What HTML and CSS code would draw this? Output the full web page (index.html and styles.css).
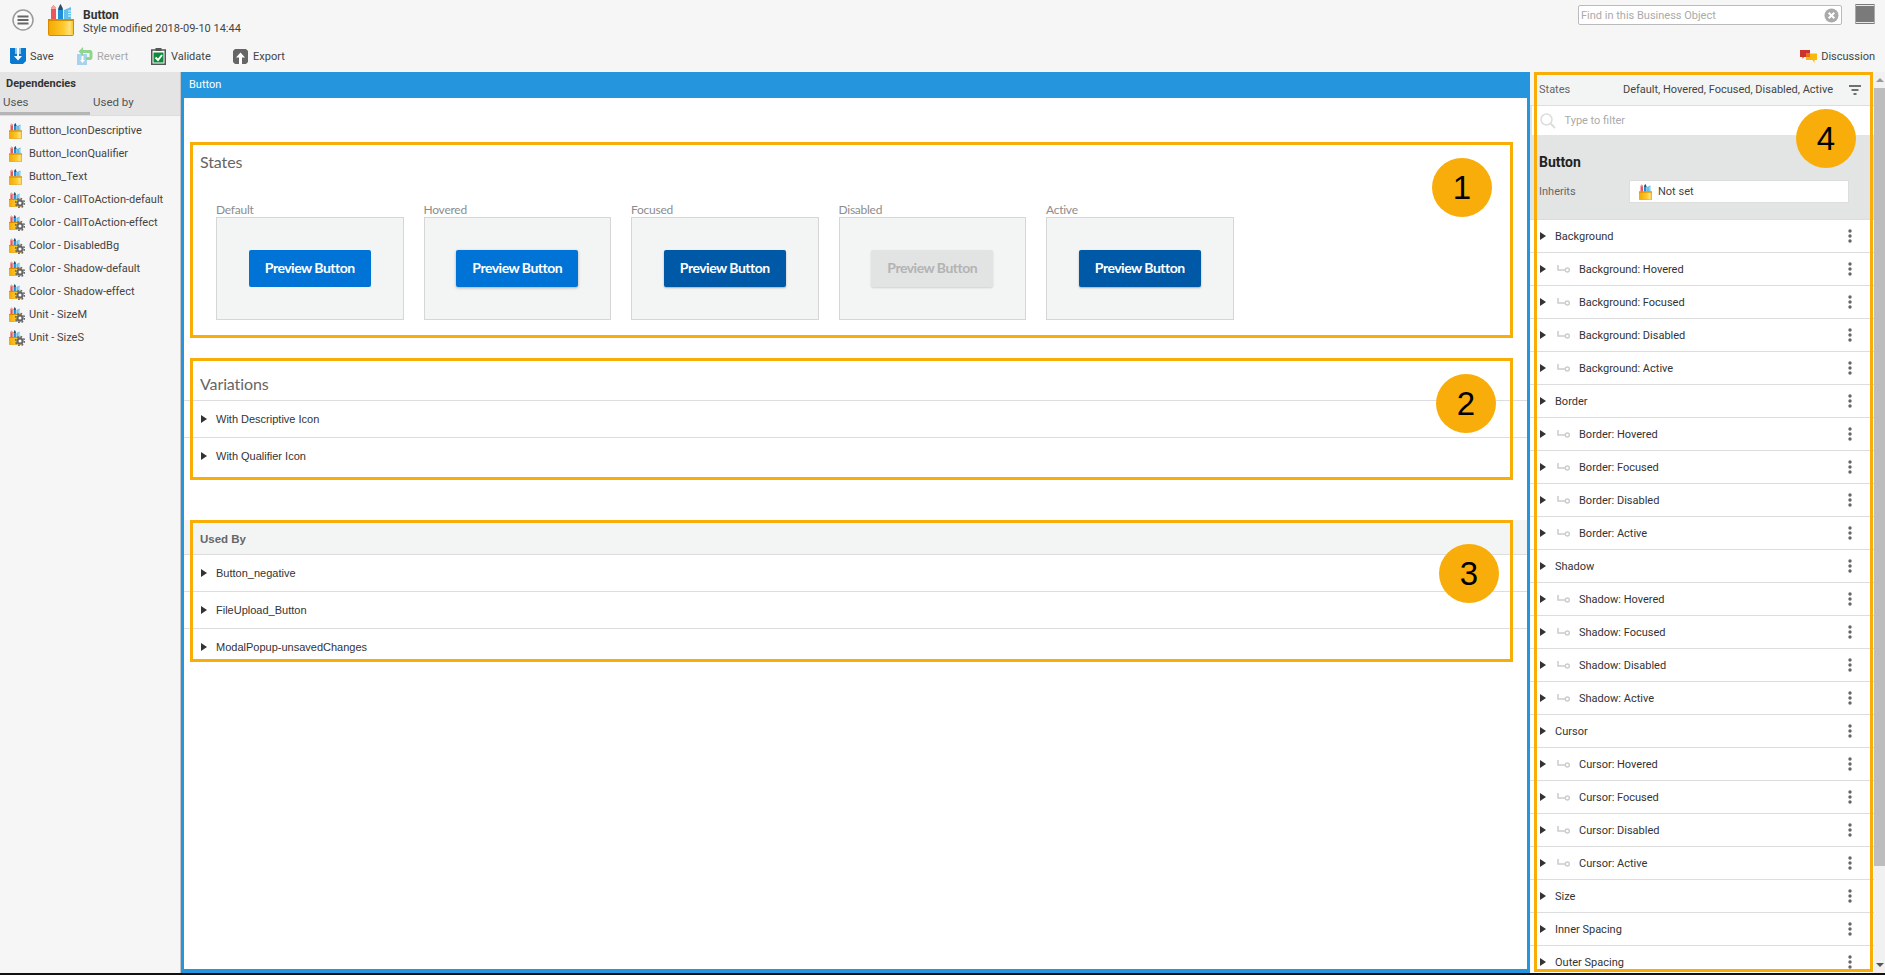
FILE: index.html
```html
<!DOCTYPE html>
<html lang="en">
<head>
<meta charset="utf-8">
<title>Button</title>
<link rel="stylesheet" href="styles.css">
</head>
<body>
<svg class="defs" aria-hidden="true">
  <defs>
    <linearGradient id="potfill" x1="0" x2="1" y1="0" y2="0">
      <stop offset="0" stop-color="#f5a800"/>
      <stop offset="0.6" stop-color="#fdc92e"/>
      <stop offset="0.85" stop-color="#ffe27e"/>
      <stop offset="1" stop-color="#f8c020"/>
    </linearGradient>
    <symbol id="pot" viewBox="0 0 26 32">
      <path d="M3 15V4L5.500 1L8 4V15Z" fill="#e8575c"/>
      <path d="M3 5H8V4L5.500 1L3 4Z" fill="#f2a6a0"/>
      <path d="M10 15V5L12.500 0L15 5V15Z" fill="#1f8fd8"/>
      <path d="M10.500 6V4L12.500 0L14.500 4V6Z" fill="#3b4a5a"/>
      <path d="M16 15V6L23 3V15Z" fill="#62c0ec"/>
      <path d="M20 7H23M20 9.500H23M20 12H23" stroke="#dff3fb" stroke-width="1"/>
      <rect x="0.500" y="15.500" width="25" height="16" rx="1" fill="url(#potfill)" stroke="#d68a00"/>
      <rect x="0" y="15" width="26" height="2" fill="#d68a00"/>
    </symbol>
    <symbol id="potcog" viewBox="0 0 16 16">
      <svg x="0" y="0" width="12" height="15" viewBox="0 0 26 32"><use href="#pot"/></svg>
      <circle cx="11" cy="11" r="3.600" fill="#666"/>
      <circle cx="11" cy="11" r="4.400" fill="none" stroke="#666" stroke-width="1.600" stroke-dasharray="1.700 1.750"/>
      <circle cx="11" cy="11" r="1.500" fill="#fff"/>
    </symbol>
    <symbol id="link" viewBox="0 0 13 8">
      <path d="M1 0V5H8" fill="none" stroke="#ccc" stroke-width="1.500"/>
      <circle cx="10.300" cy="5" r="2" fill="none" stroke="#ccc" stroke-width="1.400"/>
    </symbol>
    <symbol id="kebab" viewBox="0 0 4 14">
      <circle cx="2" cy="2" r="1.700" fill="#666"/>
      <circle cx="2" cy="7" r="1.700" fill="#666"/>
      <circle cx="2" cy="12" r="1.700" fill="#666"/>
    </symbol>
  </defs>
</svg>

<div class="app">
  <header class="topbar">
    <button class="menu-btn" aria-label="Menu">
      <svg width="22" height="22" viewBox="0 0 22 22"><circle cx="11" cy="11" r="10" fill="#fafafa" stroke="#9a9a9a" stroke-width="1.500"/><path d="M5.500 7.500H16.500M5.500 11H16.500M5.500 14.500H16.500" stroke="#666" stroke-width="2"/></svg>
    </button>
    <svg class="big-pot" width="26" height="32"><use href="#pot"/></svg>
    <div class="doc-title">
      <div class="doc-name">Button</div>
      <div class="doc-sub">Style modified 2018-09-10 14:44</div>
    </div>
    <div class="top-right">
      <div class="find">
        <span class="find-text">Find in this Business Object</span>
        <svg width="15" height="15" viewBox="0 0 15 15"><circle cx="7.500" cy="7.500" r="7" fill="#aaa"/><path d="M4.700 4.700L10.300 10.300M10.300 4.700L4.700 10.300" stroke="#fff" stroke-width="2"/></svg>
      </div>
      <svg class="view-ico" width="20" height="20" viewBox="0 0 20 20"><rect width="20" height="20" fill="#7a7a7a"/><path d="M0 1.500H20M0 18.500H20" stroke="#e8e8e8" stroke-width="1"/><path d="M.5 0V20M19.500 0V20" stroke="#aaa" stroke-width="1"/></svg>
    </div>
  </header>

  <nav class="toolbar">
    <div class="tool tool-save">
      <svg width="16" height="16" viewBox="0 0 16 16"><path d="M0 0H16V13L13 16H1.500L0 14.500Z" fill="#0a7ad1"/><path d="M5 0H11V6H5Z" fill="#8cc6ef"/><path d="M7 0H9V8H12L8 12.500L4 8H7Z" fill="#fff"/></svg>
      <span>Save</span>
    </div>
    <div class="tool tool-revert is-off">
      <svg width="16" height="18" viewBox="0 0 16 18"><rect x="0" y="7" width="10" height="11" fill="#a5d2ee"/><path d="M4.500 9V13H3L5.500 16L8 13H6.500V9Z" fill="#fff"/><path d="M6 0V3H13Q15.500 3 15.500 6V10Q15.500 13 13 13H9V10H12.500V6H6V9L1.500 4.500Z" fill="#8fd48f"/></svg>
      <span>Revert</span>
    </div>
    <div class="tool tool-validate">
      <svg width="15" height="17" viewBox="0 0 15 17"><rect x=".75" y="2" width="13.500" height="14.250" fill="#fff" stroke="#555" stroke-width="1.500"/><rect x="4.500" y="0" width="6" height="3" fill="#555"/><rect x="2.500" y="4.500" width="10" height="10" fill="#0f8a3a"/><path d="M4.500 9.500L7 12L11 7" fill="none" stroke="#fff" stroke-width="2"/></svg>
      <span>Validate</span>
    </div>
    <div class="tool tool-export">
      <svg width="15" height="15" viewBox="0 0 15 15"><path d="M2 0H13L15 2V13L13 15H2L0 13V2Z" fill="#666"/><path d="M7.500 3.500L12 8.500H9V15H6V8.500H3Z" fill="#fff"/></svg>
      <span>Export</span>
    </div>
    <div class="tool tool-discuss">
      <svg width="17" height="13" viewBox="0 0 17 13"><path d="M0 0H10V7H4L2.500 9V7H0Z" fill="#c9342e"/><path d="M6 3.500H17V10H14.500V13L12.500 10H6Z" fill="#f9b90b"/><path d="M6 3.500H10V7H6Z" fill="#e8701c"/></svg>
      <span>Discussion</span>
    </div>
  </nav>

  <main class="workspace">
    <aside class="deps">
      <div class="deps-head">
        <div class="deps-title">Dependencies</div>
        <div class="deps-tabs">
          <div class="deps-tab is-active">Uses</div>
          <div class="deps-tab">Used by</div>
        </div>
      </div>
      <ul class="deps-list">
        <li><svg class="ico-pot" width="13" height="16"><use href="#pot"/></svg>Button_IconDescriptive</li>
        <li><svg class="ico-pot" width="13" height="16"><use href="#pot"/></svg>Button_IconQualifier</li>
        <li><svg class="ico-pot" width="13" height="16"><use href="#pot"/></svg>Button_Text</li>
        <li><svg class="ico-cog" width="16" height="16"><use href="#potcog"/></svg>Color - CallToAction-default</li>
        <li><svg class="ico-cog" width="16" height="16"><use href="#potcog"/></svg>Color - CallToAction-effect</li>
        <li><svg class="ico-cog" width="16" height="16"><use href="#potcog"/></svg>Color - DisabledBg</li>
        <li><svg class="ico-cog" width="16" height="16"><use href="#potcog"/></svg>Color - Shadow-default</li>
        <li><svg class="ico-cog" width="16" height="16"><use href="#potcog"/></svg>Color - Shadow-effect</li>
        <li><svg class="ico-cog" width="16" height="16"><use href="#potcog"/></svg>Unit - SizeM</li>
        <li><svg class="ico-cog" width="16" height="16"><use href="#potcog"/></svg>Unit - SizeS</li>
      </ul>
    </aside>

    <section class="preview">
      <div class="preview-head">Button</div>
      <div class="preview-body">
        <div class="states">
          <h2 class="sec-title">States</h2>
          <div class="tiles">
            <div class="tile">
              <div class="tile-label">Default</div>
              <div class="tile-box"><span class="pbtn">Preview Button</span></div>
            </div>
            <div class="tile">
              <div class="tile-label">Hovered</div>
              <div class="tile-box"><span class="pbtn pbtn-hover">Preview Button</span></div>
            </div>
            <div class="tile">
              <div class="tile-label">Focused</div>
              <div class="tile-box"><span class="pbtn pbtn-dark">Preview Button</span></div>
            </div>
            <div class="tile">
              <div class="tile-label">Disabled</div>
              <div class="tile-box"><span class="pbtn pbtn-off">Preview Button</span></div>
            </div>
            <div class="tile">
              <div class="tile-label">Active</div>
              <div class="tile-box"><span class="pbtn pbtn-dark">Preview Button</span></div>
            </div>
          </div>
        </div>

        <div class="variations">
          <h2 class="sec-title var-title">Variations</h2>
          <div class="prow"><i class="tri"></i>With Descriptive Icon</div>
          <div class="prow prow-last"><i class="tri"></i>With Qualifier Icon</div>
        </div>

        <div class="usedby">
          <div class="usedby-head">Used By</div>
          <div class="prow"><i class="tri"></i>Button_negative</div>
          <div class="prow"><i class="tri"></i>FileUpload_Button</div>
          <div class="prow prow-last"><i class="tri"></i>ModalPopup-unsavedChanges</div>
        </div>
      </div>

      <div class="note note-1"><span class="badge badge-1">1</span></div>
      <div class="note note-2"><span class="badge badge-2">2</span></div>
      <div class="note note-3"><span class="badge badge-3">3</span></div>
    </section>

    <aside class="props">
      <div class="props-states">
        <span class="props-label">States</span>
        <span class="props-value">Default, Hovered, Focused, Disabled, Active</span>
        <svg width="12" height="10" viewBox="0 0 12 10"><path d="M0 1H12M2.500 5H9.500M4.500 9H7.500" stroke="#444" stroke-width="1.700"/></svg>
      </div>
      <div class="props-filter">
        <svg width="16" height="16" viewBox="0 0 16 16"><circle cx="6.500" cy="6.500" r="5.500" fill="none" stroke="#ddd" stroke-width="1.500"/><path d="M10.500 10.500L15 15" stroke="#ddd" stroke-width="2"/></svg>
        <span>Type to filter</span>
      </div>
      <div class="props-info">
        <div class="props-name">Button</div>
        <div class="props-inherit">
          <span class="inherit-label">Inherits</span>
          <div class="inherit-input"><svg width="13" height="16"><use href="#pot"/></svg>Not set</div>
        </div>
      </div>
      <div class="plist">
        <div class="row"><i class="tri"></i>Background<svg class="kebab"><use href="#kebab"/></svg></div>
        <div class="row"><i class="tri"></i><svg class="link"><use href="#link"/></svg>Background: Hovered<svg class="kebab"><use href="#kebab"/></svg></div>
        <div class="row"><i class="tri"></i><svg class="link"><use href="#link"/></svg>Background: Focused<svg class="kebab"><use href="#kebab"/></svg></div>
        <div class="row"><i class="tri"></i><svg class="link"><use href="#link"/></svg>Background: Disabled<svg class="kebab"><use href="#kebab"/></svg></div>
        <div class="row"><i class="tri"></i><svg class="link"><use href="#link"/></svg>Background: Active<svg class="kebab"><use href="#kebab"/></svg></div>
        <div class="row"><i class="tri"></i>Border<svg class="kebab"><use href="#kebab"/></svg></div>
        <div class="row"><i class="tri"></i><svg class="link"><use href="#link"/></svg>Border: Hovered<svg class="kebab"><use href="#kebab"/></svg></div>
        <div class="row"><i class="tri"></i><svg class="link"><use href="#link"/></svg>Border: Focused<svg class="kebab"><use href="#kebab"/></svg></div>
        <div class="row"><i class="tri"></i><svg class="link"><use href="#link"/></svg>Border: Disabled<svg class="kebab"><use href="#kebab"/></svg></div>
        <div class="row"><i class="tri"></i><svg class="link"><use href="#link"/></svg>Border: Active<svg class="kebab"><use href="#kebab"/></svg></div>
        <div class="row"><i class="tri"></i>Shadow<svg class="kebab"><use href="#kebab"/></svg></div>
        <div class="row"><i class="tri"></i><svg class="link"><use href="#link"/></svg>Shadow: Hovered<svg class="kebab"><use href="#kebab"/></svg></div>
        <div class="row"><i class="tri"></i><svg class="link"><use href="#link"/></svg>Shadow: Focused<svg class="kebab"><use href="#kebab"/></svg></div>
        <div class="row"><i class="tri"></i><svg class="link"><use href="#link"/></svg>Shadow: Disabled<svg class="kebab"><use href="#kebab"/></svg></div>
        <div class="row"><i class="tri"></i><svg class="link"><use href="#link"/></svg>Shadow: Active<svg class="kebab"><use href="#kebab"/></svg></div>
        <div class="row"><i class="tri"></i>Cursor<svg class="kebab"><use href="#kebab"/></svg></div>
        <div class="row"><i class="tri"></i><svg class="link"><use href="#link"/></svg>Cursor: Hovered<svg class="kebab"><use href="#kebab"/></svg></div>
        <div class="row"><i class="tri"></i><svg class="link"><use href="#link"/></svg>Cursor: Focused<svg class="kebab"><use href="#kebab"/></svg></div>
        <div class="row"><i class="tri"></i><svg class="link"><use href="#link"/></svg>Cursor: Disabled<svg class="kebab"><use href="#kebab"/></svg></div>
        <div class="row"><i class="tri"></i><svg class="link"><use href="#link"/></svg>Cursor: Active<svg class="kebab"><use href="#kebab"/></svg></div>
        <div class="row"><i class="tri"></i>Size<svg class="kebab"><use href="#kebab"/></svg></div>
        <div class="row"><i class="tri"></i>Inner Spacing<svg class="kebab"><use href="#kebab"/></svg></div>
        <div class="row"><i class="tri"></i>Outer Spacing<svg class="kebab"><use href="#kebab"/></svg></div>
      </div>
      <div class="note note-4"><span class="badge badge-4">4</span></div>
    </aside>

    <div class="scrollbar">
      <i class="arrow arrow-up"></i>
      <div class="thumb"></div>
      <i class="arrow arrow-down"></i>
    </div>
  </main>
</div>
</body>
</html>
```

FILE: styles.css
```css
* { box-sizing: border-box; }
html, body { margin: 0; padding: 0; height: 100%; overflow: hidden; }
body { font-family: Roboto, "Liberation Sans", sans-serif; font-size: 11px; color: #333; background: #f6f6f6; }
.defs { display: block; width: 0; height: 0; }
svg { flex: none; display: block; }

.app { height: 975px; display: flex; flex-direction: column; border-bottom: 2px solid #111; }

/* top bar */
.topbar { height: 40px; flex: none; display: flex; align-items: flex-start; padding: 9px 10px 0 12px; }
.menu-btn { width: 22px; height: 22px; padding: 0; border: 0; background: none; }
.big-pot { margin: -5px 0 0 14px; }
.doc-title { margin: -1px 0 0 9px; }
.doc-name { font-size: 12px; line-height: 14px; font-weight: 700; color: #333; }
.doc-sub { font-size: 11px; line-height: 13px; color: #444; }
.top-right { margin-left: auto; margin-top: -4px; display: flex; align-items: flex-start; gap: 13px; }
.find { width: 264px; height: 20px; background: #fff; border: 1px solid #bbb; border-radius: 2px; display: flex; align-items: center; justify-content: space-between; padding: 1px 2px 0 2px; }
.find-text { color: #aaa; font-size: 11px; }
.view-ico { margin-top: -1px; }

/* toolbar */
.toolbar { height: 32px; flex: none; display: flex; align-items: center; padding: 0 10px; }
.tool { display: flex; align-items: center; gap: 4px; color: #444; font-size: 11px; }
.tool-save { width: 67px; }
.tool-revert { width: 74px; }
.tool-validate { width: 82px; gap: 5px; }
.tool-export { gap: 5px; }
.is-off { color: #aaa; }
.tool-discuss { margin-left: auto; }

/* workspace */
.workspace { flex: 1; min-height: 0; display: flex; }

.deps { width: 181px; flex: none; background: #f6f6f6; border-right: 1px solid #c4c4c4; }
.deps-head { height: 44px; background: #e4e4e4; border-bottom: 1px solid #ddd; }
.deps-title { font-weight: 700; font-size: 11px; line-height: 14px; padding: 5px 0 0 6px; color: #333; }
.deps-tabs { display: flex; margin-top: 3px; }
.deps-tab { width: 90px; height: 21px; line-height: 16px; padding-left: 3px; color: #555; font-size: 11.500px; }
.deps-tab.is-active { border-bottom: 3px solid #b5b5b5; }
.deps-list { list-style: none; margin: 0; padding: 3px 0 0 0; }
.deps-list li { height: 23px; display: flex; align-items: center; padding-left: 9px; color: #444; }
.ico-pot { margin-right: 7px; }
.ico-cog { margin-right: 4px; }

.preview { width: 1349px; flex: none; position: relative; display: flex; flex-direction: column; border: solid #2596dd; border-width: 0 3px 4px 3px; background: #fff; }
.preview-head { height: 26px; flex: none; background: #2596dd; color: #fff; font-size: 11px; line-height: 26px; padding-left: 5px; }
.preview-body { flex: 1; padding-top: 54px; }

.sec-title { margin: 0; font: 400 16px/20px Lato, sans-serif; color: #666; padding-left: 16px; letter-spacing: -.1px; }
.tiles { display: flex; gap: 20px; padding: 31px 0 0 32px; }
.tile { width: 187.500px; }
.tile-label { font: 400 12px/14px Lato, sans-serif; color: #8d8d8d; letter-spacing: -.25px; }
.tile-box { height: 103px; background: #f3f5f5; border: 1px solid #d6d6d6; display: flex; align-items: center; justify-content: center; }
.pbtn { width: 122px; height: 37px; border-radius: 2px; background: #0073d6; color: #fff; font: 700 14px/36px Lato, sans-serif; letter-spacing: -.5px; text-align: center; }
.pbtn-hover { box-shadow: 0 1px 3px rgba(0,0,0,.3); }
.pbtn-dark { background: #0059a6; box-shadow: 0 1px 2px rgba(0,0,0,.3); }
.pbtn-off { background: #e2e3e3; color: #b3b3b3; box-shadow: 0 1px 2px rgba(0,0,0,.15); }

.variations { margin-top: 54px; }
.var-title { height: 26px; }
.prow { height: 37px; display: flex; align-items: center; padding-left: 17px; border-top: 1px solid #ddd; font-family: "Liberation Sans", sans-serif; font-size: 11px; color: #333; }
.tri { flex: none; width: 0; height: 0; border-style: solid; border-width: 4px 0 4px 6px; border-color: transparent transparent transparent #333; }
.prow .tri { margin-right: 9px; }

.usedby { margin-top: 46px; }
.usedby-head { height: 34px; background: #f3f5f5; font: 700 11.500px/38px "Liberation Sans", sans-serif; color: #666; padding-left: 16px; }

/* annotations over the content */
.note { position: absolute; border: 3px solid #f9ad07; pointer-events: none; }
.note-1 { left: 6px; top: 70px; width: 1323px; height: 196px; }
.note-2 { left: 6px; top: 286px; width: 1323px; height: 122px; }
.note-3 { left: 6px; top: 448px; width: 1323px; height: 142px; }
.note-4 { left: 4px; top: 0; width: 339px; bottom: 1px; }
.badge { position: absolute; width: 60px; height: 59px; border-radius: 50%; background: #f9ad0a; color: #000; font: 400 33px/59px "Liberation Sans", sans-serif; text-align: center; }
.badge-1 { left: 1239px; top: 13px; }
.badge-2 { left: 1243px; top: 13px; }
.badge-3 { left: 1246px; top: 21px; }
.badge-4 { left: 259px; top: 34px; }

/* properties */
.props { width: 344px; flex: none; position: relative; overflow: hidden; background: #fff; }
.props-states { height: 34px; background: #f3f5f5; border-bottom: 1px solid #ddd; display: flex; align-items: center; padding: 2px 13px 0 9px; color: #333; }
.props-label { color: #666; }
.props-value { margin-left: auto; margin-right: 16px; color: #444; }
.props-filter { height: 30px; display: flex; align-items: center; gap: 8.500px; padding-left: 8px; color: #aaa; border: solid #e4e4e4; border-width: 0 0 1px 2px; }
.props-info { height: 83px; background: #e3e4e4; padding: 17px 0 0 9px; }
.props-name { font-size: 14px; font-weight: 700; line-height: 18px; color: #222; }
.props-inherit { display: flex; align-items: center; margin-top: 9px; }
.inherit-label { width: 90px; color: #666; }
.inherit-input { width: 220px; height: 23px; background: #fff; border: 1px solid #ddd; display: flex; align-items: center; gap: 6px; padding-left: 9px; color: #444; }
.plist { border-top: 1px solid #ddd; }
.row { height: 33px; padding-left: 10px; border-bottom: 1px solid #ddd; display: flex; align-items: center; color: #333; }
.row .tri { margin-right: 9px; }
.link { width: 13px; height: 8px; margin: 0 9px 0 2px; }
.kebab { width: 4px; height: 14px; margin-left: auto; margin-right: 22px; }

.scrollbar { flex: 1; background: #f1f1f1; display: flex; flex-direction: column; align-items: center; padding-top: 6px; }
.thumb { width: 100%; height: 778px; background: #bdbdbd; margin-top: 6px; }
.arrow { flex: none; width: 0; height: 0; border-style: solid; border-color: transparent; }
.arrow-up { border-width: 0 4px 4px 4px; border-bottom-color: #999; }
.arrow-down { border-width: 4px 4px 0 4px; border-top-color: #555; margin-top: 97px; }
```
